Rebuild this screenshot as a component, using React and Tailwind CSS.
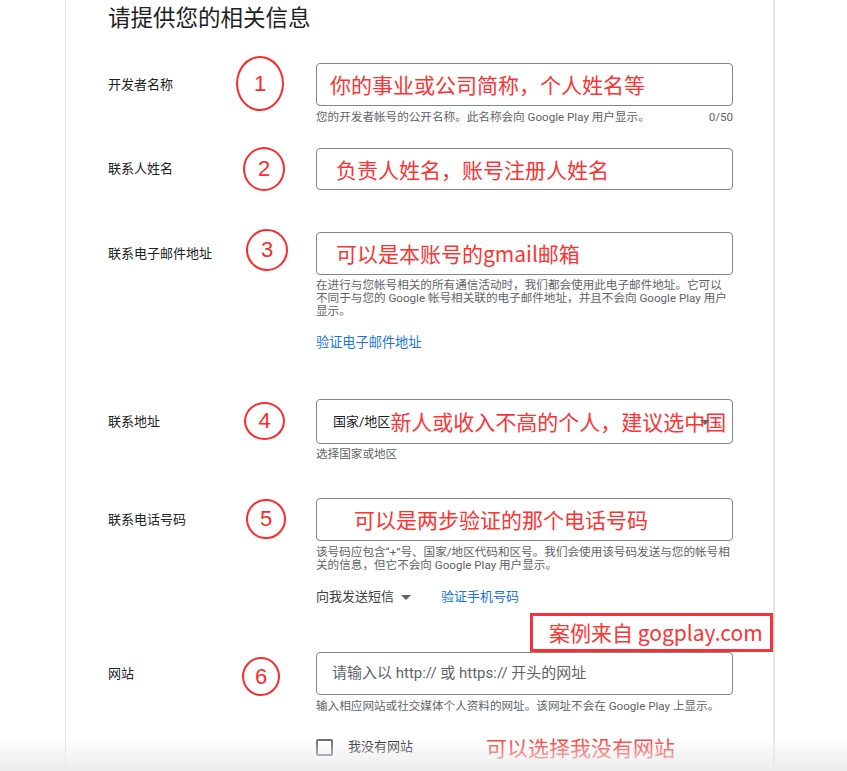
const UI = "font-[Roboto,'Noto_Sans_CJK_SC',sans-serif]";
const CJK = "font-['Noto_Sans_CJK_SC',sans-serif]";

function Mark({ n, className }) {
  // red hand-drawn circle annotation
  return (
    <div
      className={`absolute flex items-center justify-center rounded-[50%] border-[2.5px] border-[#ff2b2b] text-[22px] leading-none text-[#ff2b2b] font-['Liberation_Sans',sans-serif] ${className}`}
    >
      {n}
    </div>
  );
}

function Row({ label, mark, boxH = "h-[43px]", children, below, className = "" }) {
  return (
    <div className={`grid grid-cols-[208px_417px] ${className}`}>
      <div className={`relative flex items-center text-[13px] text-[#202124] ${boxH}`}>
        {label}
        {mark}
      </div>
      <div>
        <div className={`relative flex items-center rounded-[4px] border border-[#80868b] ${boxH}`}>
          {children}
        </div>
        {below}
      </div>
    </div>
  );
}

function Red({ children, className = "" }) {
  return <span className={`${CJK} text-[21px] leading-none text-[#ff3333] whitespace-nowrap ${className}`}>{children}</span>;
}

function Help({ children, className = "" }) {
  return <div className={`text-[11.6px] leading-[13px] text-[#5f6368] ${className}`}>{children}</div>;
}

export default function App() {
  return (
    <div className={`relative h-[771px] overflow-hidden bg-white ${UI}`}>
      <div className="ml-[65px] h-full w-[710px] border-l border-r-2 border-[#e6e6e6] pl-[42px]">
        <h1 className="h-[36px] text-[22.5px] leading-[36px] font-normal text-[#202124]">请提供您的相关信息</h1>

        <Row
          className="mt-[27px]"
          label="开发者名称"
          mark={<Mark n="1" className="left-[128px] top-[-7px] h-[55px] w-[48px]" />}
          below={
            <Help className="mt-[5px] flex justify-between">
              <span>您的开发者帐号的公开名称。此名称会向 Google Play 用户显示。</span>
              <span>0/50</span>
            </Help>
          }
        >
          <Red className="pl-[13px]">你的事业或公司简称，个人姓名等</Red>
        </Row>

        <Row
          className="mt-[24px]"
          boxH="h-[42px]"
          label="联系人姓名"
          mark={<Mark n="2" className="left-[135px] top-[-1px] h-[44px] w-[42px]" />}
        >
          <Red className="pl-[19px]">负责人姓名，账号注册人姓名</Red>
        </Row>

        <Row
          className="mt-[42px]"
          label="联系电子邮件地址"
          mark={<Mark n="3" className="left-[138px] top-[-3px] h-[42px] w-[42px]" />}
          below={
            <>
              <Help className="mt-[4px]">
                <div className="whitespace-nowrap">在进行与您帐号相关的所有通信活动时，我们都会使用此电子邮件地址。它可以</div>
                <div className="whitespace-nowrap">不同于与您的 Google 帐号相关联的电子邮件地址，并且不会向 Google Play 用户</div>
                <div>显示。</div>
              </Help>
              <div className="mt-[16px] text-[13.2px] leading-[18px] text-[#1a73e8]">验证电子邮件地址</div>
            </>
          }
        >
          <Red className="pl-[19px]">可以是本账号的gmail邮箱</Red>
        </Row>

        <Row
          className="mt-[47px]"
          boxH="h-[45px]"
          label="联系地址"
          mark={<Mark n="4" className="left-[136px] top-[3px] h-[38px] w-[41px]" />}
          below={<Help className="mt-[4px]">选择国家或地区</Help>}
        >
          <span className="pl-[16px] text-[13px] text-[#202124]">国家/地区</span>
          <span className="absolute right-[22px] top-[20px] border-x-[5px] border-t-[5px] border-x-transparent border-t-[#5f6368]" />
          <Red className="relative">新人或收入不高的个人，建议选中国</Red>
        </Row>

        <Row
          className="mt-[37px]"
          label="联系电话号码"
          mark={<Mark n="5" className="left-[138px] top-[1px] h-[40px] w-[40px]" />}
          below={
            <>
              <Help className="mt-[5px]">
                <div className="whitespace-nowrap">该号码应包含“+”号、国家/地区代码和区号。我们会使用该号码发送与您的帐号相</div>
                <div>关的信息，但它不会向 Google Play 用户显示。</div>
              </Help>
              <div className="mt-[16px] flex h-[18px] items-center text-[13px]">
                <span className="text-[#3c4043]">向我发送短信</span>
                <span className="ml-[7px] border-x-[5px] border-t-[5px] border-x-transparent border-t-[#5f6368]" />
                <span className="ml-[30px] text-[#1a73e8]">验证手机号码</span>
              </div>
            </>
          }
        >
          <Red className="pl-[37px]">可以是两步验证的那个电话号码</Red>
        </Row>

        <div className="mt-[7px] ml-[422px] flex h-[39px] w-[243px] items-center border-[3px] border-[#f5313a] pl-[16px]">
          <Red>案例来自 gogplay.com</Red>
        </div>

        <Row
          label="网站"
          mark={<Mark n="6" className="left-[134px] top-[5px] h-[39px] w-[38px]" />}
          below={
            <Help className="mt-[5px] whitespace-nowrap">输入相应网站或社交媒体个人资料的网址。该网址不会在 Google Play 上显示。</Help>
          }
        >
          <span className="pl-[15px] text-[15px] text-[#5f6368]">请输入以 http:// 或 https:// 开头的网址</span>
        </Row>

        <div className="mt-[25px] ml-[208px] flex h-[18px] items-center">
          <span className="h-[17px] w-[17px] rounded-[2px] border-2 border-[#5f6368]" />
          <span className="ml-[15px] text-[13px] text-[#202124]">我没有网站</span>
          <Red className="ml-[73px]">可以选择我没有网站</Red>
        </div>
      </div>

      <div className="pointer-events-none absolute inset-x-0 bottom-0 h-[34px] bg-linear-to-b from-white/0 to-[#ededed]" />
    </div>
  );
}
